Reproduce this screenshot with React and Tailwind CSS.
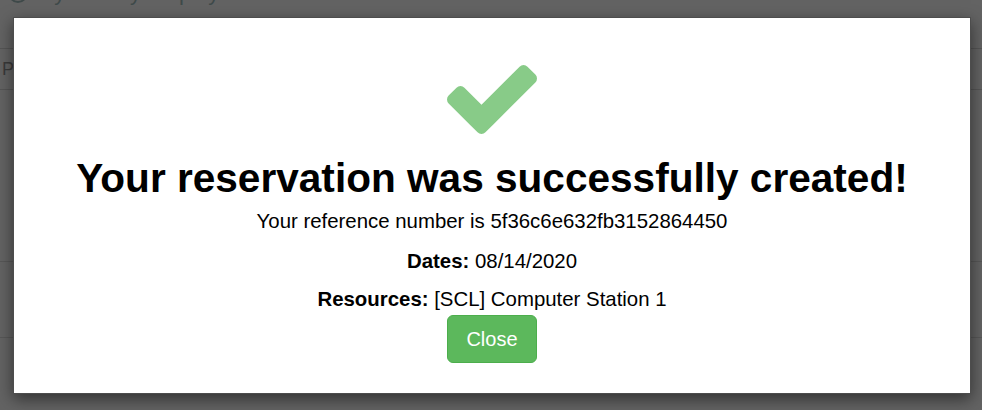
export default function App() {
  return (
    <div
      className="relative w-[982px] h-[410px] overflow-hidden bg-[#636363]"
      style={{ fontFamily: '"Liberation Sans", Arial, sans-serif' }}
    >
      {/* dimmed page behind the modal */}
      <div className="flex flex-col text-[#3a3a3a]">
        <div className="flex items-center gap-2 h-[10px] -mt-[12px] pl-[8px] text-[22px] leading-none">
          <span className="inline-block w-[20px] h-[20px] rounded-full border-2 border-[#3f4a4a]" />
          <span className="text-[#3f4a4a]">My Gallery Display</span>
        </div>
        <div className="h-[50px]" />
        <div className="h-[42px] border-t border-b border-[#555] flex items-center pl-[2px] text-[18px] text-[#3a3a3a]">
          P
        </div>
        <div className="h-[171px]" />
        <div className="h-[77px] border-t border-b border-[#575757]" />
      </div>

      {/* modal */}
      <div className="absolute left-[13px] top-[17px] w-[958px] h-[377px] border border-[#4d4d4d] bg-white shadow-[0_5px_15px_rgba(0,0,0,0.5)]">
        <div className="flex flex-col items-center pt-[47px] text-black">
          <svg
            viewBox="121 334 1550 1188"
            className="w-[90px] h-[69px]"
            fill="#88cb88"
          >
            <path d="M1671 566q0 40-28 68l-724 724-136 136q-28 28-68 28t-68-28l-136-136-362-362q-28-28-28-68t28-68l136-136q28-28 68-28t68 28l294 295 656-657q28-28 68-28t68 28l136 136q28 28 28 68z" />
          </svg>
          <h1 className="mt-[22px] text-[40.6px] leading-[44px] font-bold">
            Your reservation was successfully created!
          </h1>
          <p className="mt-[9px] text-[20.4px] leading-[24px]">
            Your reference number is 5f36c6e632fb3152864450
          </p>
          <p className="mt-[16px] text-[20.4px] leading-[24px]">
            <span className="font-bold">Dates:</span> 08/14/2020
          </p>
          <p className="mt-[14px] text-[20.4px] leading-[24px]">
            <span className="font-bold">Resources:</span> [SCL] Computer Station 1
          </p>
          <button className="mt-[4px] w-[90px] h-[48px] rounded-[6px] bg-[#5cb85c] border border-[#4cae4c] text-white text-[20px] leading-none">
            Close
          </button>
        </div>
      </div>
    </div>
  );
}
